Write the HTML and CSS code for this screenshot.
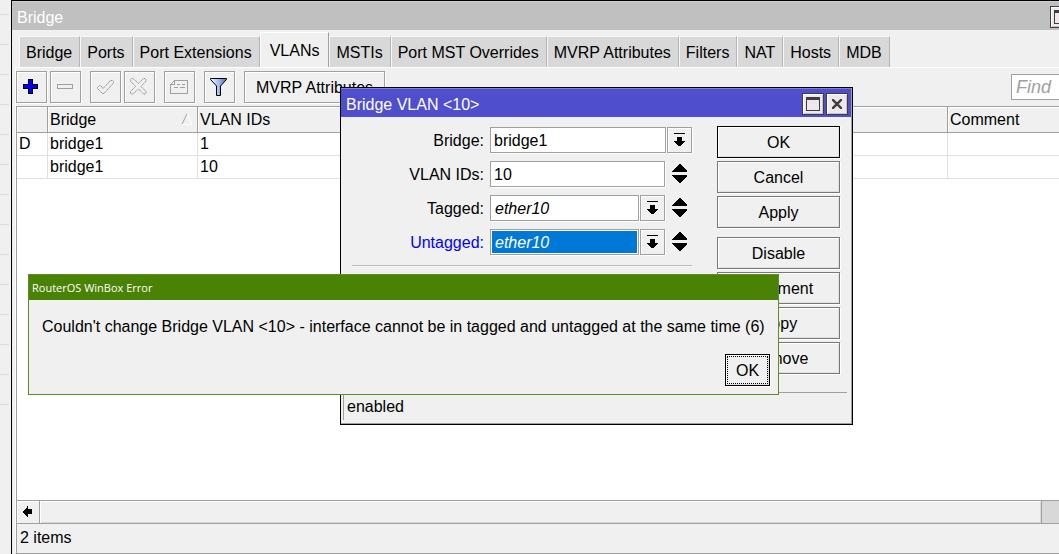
FILE: index.html
```html
<!DOCTYPE html>
<html lang="en">
<head>
<meta charset="utf-8">
<title>Bridge</title>
<link rel="stylesheet" href="styles.css">
</head>
<body>
<svg class="defs" width="0" height="0" aria-hidden="true">
  <defs>
    <symbol id="drop" viewBox="0 0 13 13" shape-rendering="crispEdges"><path d="M1 0h11v1H1zM4 4h5v4h3v1h-1v1h-1v1H9v1H8v1H5v-1H4v-1H3v-1H2V9H1V8h3z"/></symbol>
    <symbol id="spin" viewBox="0 0 15 19" shape-rendering="crispEdges"><path d="M7 0h1l7 7v1H0V7zM0 11h15v1l-7 7H7l-7-7z"/></symbol>
    <symbol id="max" viewBox="0 0 14 14" shape-rendering="crispEdges"><path fill="#403c40" fill-rule="evenodd" d="M0 0h14v14H0zM1 3v10h12V3z"/></symbol>
    <symbol id="close" viewBox="0 0 10 10"><path d="M0 0l10 10M10 0L0 10" stroke="#403c40" stroke-width="2.4"/></symbol>
  </defs>
</svg>
<main class="desktop">
  <section class="window">
    <header class="titlebar">
      <h1 class="title">Bridge</h1>
      <button class="winbtn" aria-label="Maximize"><svg width="14" height="14"><use href="#max"/></svg></button>
      <button class="winbtn" aria-label="Close"><svg width="10" height="10"><use href="#close"/></svg></button>
    </header>
    <nav class="tabs">
      <button class="tab">Bridge</button>
      <button class="tab">Ports</button>
      <button class="tab">Port Extensions</button>
      <button class="tab active">VLANs</button>
      <button class="tab">MSTIs</button>
      <button class="tab">Port MST Overrides</button>
      <button class="tab">MVRP Attributes</button>
      <button class="tab">Filters</button>
      <button class="tab">NAT</button>
      <button class="tab">Hosts</button>
      <button class="tab">MDB</button>
    </nav>
    <div class="panel">
      <div class="toolbar">
        <div class="group">
          <button class="tool" aria-label="Add"><svg width="15" height="15" shape-rendering="crispEdges"><path d="M5 0h5v5h5v5h-5v5H5v-5H0V5h5z"/><path fill="#00f" d="M6 1h3v5h5v3H9v5H6V9H1V6h5z"/></svg></button>
          <button class="tool" aria-label="Remove"><svg width="16" height="5" shape-rendering="crispEdges"><path fill="#a0a0a0" fill-rule="evenodd" d="M0 0h16v5H0zM1 1v3h14V1z"/></svg></button>
        </div>
        <div class="group">
          <button class="tool" aria-label="Enable"><svg width="18" height="16" fill="none"><path d="M1.500 8.500l2-2h1l2.500 3 7.500-8h2l1 1v1.500L8 14.500H6.500l-5-5z" stroke="#909090" stroke-dasharray="1.600 .5"/></svg></button>
          <button class="tool" aria-label="Disable"><svg width="17" height="17" fill="none"><path d="M3 .5l5.500 5 5-5h1.500l1 1V3l-5 5.500 5 5V15l-1 1h-1.500l-5-5-5.500 5H1.500l-1-1v-1.500l5-5-5-5.500V1.500l1-1z" stroke="#909090" stroke-dasharray="1.600 .5"/></svg></button>
        </div>
        <button class="tool" aria-label="Comment"><svg width="18" height="14" fill="none" stroke="#a0a0a0" shape-rendering="crispEdges"><path d="M4.500.5h13v13H.5v-9zM4.500.5v4h-4M7 4.500h3M12 4.500h3M4 7.500h4M10 7.500h5"/></svg></button>
        <button class="tool" aria-label="Filter"><svg width="17" height="18"><defs><linearGradient id="glass"><stop stop-color="#f2f6ff"/><stop offset=".5" stop-color="#a9bdee"/><stop offset="1" stop-color="#4565b5"/></linearGradient></defs><path d="M.5.5h16v1L10.500 8v9.500h-4V8L.5 1.500z" fill="url(#glass)" stroke="#000"/></svg></button>
        <button class="tool wide">MVRP Attributes</button>
        <input class="find" type="text" placeholder="Find" aria-label="Find">
      </div>
      <div class="grid">
        <table class="list">
          <colgroup><col class="c-flag"><col class="c-bridge"><col class="c-ids"><col></colgroup>
          <thead>
            <tr><th></th><th><span class="sorted">Bridge<svg width="12" height="12" fill="none"><path d="M1 11.500L6 .5" stroke="#a0a0a0"/><path d="M6 .5l5 11H1" stroke="#fff"/></svg></span></th><th>VLAN IDs</th><th>Comment</th></tr>
          </thead>
          <tbody>
            <tr><td>D</td><td>bridge1</td><td>1</td><td></td></tr>
            <tr><td></td><td>bridge1</td><td>10</td><td></td></tr>
          </tbody>
        </table>
      </div>
      <div class="scrollbar">
        <button class="scroll-left" aria-label="Scroll left"><svg width="9" height="11" shape-rendering="crispEdges"><path d="M5 0v3h4v5H5v3H4v-1H3V9H2V8H1V7H0V5h1V4h1V3h1V2h1V0z"/></svg></button>
        <div class="thumb"></div>
      </div>
      <footer class="count">2 items</footer>
    </div>
  </section>

  <section class="editor" role="dialog" aria-label="Bridge VLAN">
    <header class="titlebar blue">
      <h2 class="title">Bridge VLAN &lt;10&gt;</h2>
      <button class="winbtn" aria-label="Maximize"><svg width="14" height="14"><use href="#max"/></svg></button>
      <button class="winbtn" aria-label="Close"><svg width="10" height="10"><use href="#close"/></svg></button>
    </header>
    <div class="editor-body">
      <form class="form">
        <div class="row">
          <label for="bridge">Bridge:</label>
          <select class="field" id="bridge"><option>bridge1</option></select>
          <button class="drop" type="button" aria-label="Open bridge list"><svg width="13" height="13"><use href="#drop"/></svg></button>
        </div>
        <div class="row">
          <label for="ids">VLAN IDs:</label>
          <input class="field" id="ids" type="text" value="10">
          <button class="spin" type="button" aria-label="Add or remove VLAN ID"><svg width="15" height="19"><use href="#spin"/></svg></button>
        </div>
        <div class="row">
          <label for="tagged">Tagged:</label>
          <select class="field italic" id="tagged"><option>ether10</option></select>
          <button class="drop" type="button" aria-label="Open tagged list"><svg width="13" height="13"><use href="#drop"/></svg></button>
          <button class="spin" type="button" aria-label="Add or remove tagged"><svg width="15" height="19"><use href="#spin"/></svg></button>
        </div>
        <div class="row">
          <label class="changed" for="untagged">Untagged:</label>
          <select class="field italic selected" id="untagged"><option>ether10</option></select>
          <button class="drop" type="button" aria-label="Open untagged list"><svg width="13" height="13"><use href="#drop"/></svg></button>
          <button class="spin" type="button" aria-label="Add or remove untagged"><svg width="15" height="19"><use href="#spin"/></svg></button>
        </div>
        <hr class="rule">
      </form>
      <div class="actions">
        <button class="btn default">OK</button>
        <button class="btn">Cancel</button>
        <button class="btn">Apply</button>
        <button class="btn apart">Disable</button>
        <button class="btn">Comment</button>
        <button class="btn">Copy</button>
        <button class="btn">Remove</button>
      </div>
    </div>
    <footer class="state">enabled</footer>
  </section>

  <section class="error" role="alertdialog" aria-label="RouterOS WinBox Error">
    <h2 class="error-title">RouterOS WinBox Error</h2>
    <p class="message">Couldn't change Bridge VLAN &lt;10&gt; - interface cannot be in tagged and untagged at the same time (6)</p>
    <div class="error-actions"><button class="btn default focused"><span>OK</span></button></div>
  </section>
</main>
</body>
</html>
```
FILE: styles.css
```css
* { box-sizing: border-box; }
body {
  margin: 0;
  background: #f0f0f0;
  color: #000;
  font: 16px/20px "Liberation Sans", Arial, sans-serif;
}
button, input, select {
  margin: 0;
  padding: 0;
  border: 0;
  border-radius: 0;
  background: none;
  color: inherit;
  font: inherit;
}
svg { display: block; flex: none; }
.defs { position: absolute; }
h1, h2, p { margin: 0; font-size: 16px; font-weight: normal; }

.desktop {
  position: relative;
  height: 100vh;
  padding-left: 11px;
  overflow: hidden;
  background: repeating-linear-gradient(#f0f0f0 0 14px, #dcdcdc 14px 15px, #f0f0f0 15px 30px) 0 0 / 9px 410px no-repeat;
}

/* Bridge list window; it runs past the right edge of the desktop */
.window {
  display: flex;
  flex-direction: column;
  height: 100%;
  margin-right: -40px;
  border: solid #000;
  border-width: 1px 0 0 1px;
  background: #f0f0f0;
}
.titlebar {
  display: flex;
  align-items: center;
  gap: 2px;
  height: 29px;
  padding: 2px 3px 0 5px;
  border-top: 1px solid #d0d0d0;
  background: #c0c0c0;
  color: #fff;
}
.title { flex: 1; padding-top: 2px; }
.winbtn {
  display: flex;
  align-items: center;
  justify-content: center;
  width: 22px;
  height: 22px;
  border: 1px solid #403c40;
  background: #ece8ec;
  box-shadow: inset 1px 1px #fff, inset -1px -1px #c8c4c8;
}
.titlebar .winbtn { margin-bottom: 1px; }
.tabs {
  display: flex;
  align-items: flex-end;
  height: 37px;
  padding-left: 7px;
}
.tab {
  height: 31px;
  padding: 1px 7px 0 6px;
  border: solid #f8f8f8;
  border-width: 1px 1px 0;
  border-right-color: #b4b4b4;
  background: #d8d8d8;
}
.tab.active {
  height: 35px;
  padding: 1px 9px 0;
  border-color: #fff #a0a0a0 #fff #fff;
  background: #f0f0f0;
}
.panel {
  flex: 1;
  display: flex;
  flex-direction: column;
  margin-left: 3px;
  border-top: 1px solid #fff;
  border-left: 1px solid #fff;
  border-bottom: 1px solid #a0a0a0;
}
.toolbar {
  display: flex;
  align-items: center;
  gap: 9px;
  height: 38px;
  padding-right: 4px;
}
.group { display: flex; gap: 3px; }
.tool {
  display: flex;
  align-items: center;
  justify-content: center;
  width: 31px;
  height: 32px;
  padding: 0 2px 1px 0;
  border: 1px solid #a0a0a0;
  box-shadow: inset 1px 1px #fff, 1px 1px #fff;
}
.tool.wide { width: auto; padding: 1px 11px 0; }
.find {
  width: 84px;
  height: 26px;
  margin-left: auto;
  padding: 1px 4px 0;
  border: 1px solid #a0a0a0;
  background: #fff;
}
.find::placeholder { color: #a0a0a0; font-style: italic; font-size: 18px; opacity: 1; }

.grid {
  flex: 1;
  border: solid #a0a0a0;
  border-width: 1px 0 0 1px;
  background: #fff;
}
.list { width: 100%; table-layout: fixed; border-collapse: separate; border-spacing: 0; }
.c-flag { width: 31px; }
.c-bridge { width: 150px; }
.c-ids { width: 750px; }
.list th, .list td { padding: 0 2px; text-align: left; font-weight: normal; }
.list th {
  height: 26px;
  padding-top: 1px;
  border-right: 1px solid #a0a0a0;
  border-bottom: 1px solid #a0a0a0;
  background: #f0f0f0;
  box-shadow: inset 1px 1px #fff;
}
.list td { height: 23px; border-right: 1px solid #e0e0e0; border-bottom: 1px solid #e0e0e0; }
.sorted { display: flex; align-items: center; justify-content: space-between; padding-right: 2px; }
.sorted svg { margin-bottom: 2px; }

.scrollbar {
  display: flex;
  height: 24px;
  border: solid #a0a0a0;
  border-width: 1px 0 1px 1px;
  background: #d8d8d8;
}
.scroll-left {
  display: flex;
  align-items: center;
  justify-content: center;
  width: 23px;
  padding: 0 2px 2px 0;
  border-right: 1px solid #a0a0a0;
  background: #f0f0f0;
  box-shadow: inset 1px 1px #fff;
}
.thumb {
  flex: 1;
  margin-right: 57px;
  border-right: 1px solid #a0a0a0;
  background: #f0f0f0;
  box-shadow: inset 1px 1px #fff, inset -1px -1px #d8d8d8;
}
.count { height: 29px; padding: 4px 3px; border-left: 1px solid #a0a0a0; }

/* VLAN editor */
.editor {
  position: absolute;
  left: 340px;
  top: 87px;
  width: 513px;
  border: 1px solid #000;
  background: #f0f0f0;
  box-shadow: inset -1px -1px #a0a0a0;
}
.titlebar.blue { margin-right: 1px; border-top-color: #8080d8; background: #4f4fcd; }
.editor-body { display: flex; justify-content: space-between; padding: 9px 12px 18px 11px; }
.form { width: 340px; padding-top: 1px; }
.row { display: flex; height: 34px; align-items: flex-start; padding-right: 27px; }
.row:first-child { padding-right: 0; }
.row label { width: 132px; margin-right: 6px; line-height: 28px; text-align: right; }
.changed { color: #00f; }
.field {
  appearance: none;
  flex: 1;
  min-width: 0;
  height: 26px;
  padding: 1px 3px 0;
  border: 1px solid #a0a0a0;
  background: #fff;
  box-shadow: 1px 1px #fff;
}
.italic { padding-left: 4px; font-style: italic; }
.selected { background: #0078d7; color: #fff; box-shadow: inset 0 0 0 1px #fff, 1px 1px #fff; }
.drop {
  display: flex;
  align-items: center;
  justify-content: center;
  width: 25px;
  height: 26px;
  padding-bottom: 1px;
  margin-left: 1px;
  border: 1px solid #a0a0a0;
  box-shadow: inset 1px 1px #fff, 1px 1px #fff;
}
.spin { display: flex; align-items: center; height: 25px; margin: 0 -22px 0 7px; }
.rule { margin: 2px 0 0; border: 0; border-top: 1px solid #bbb; border-bottom: 1px solid #f8f8f8; }
.actions { display: flex; flex-direction: column; gap: 3px; width: 123px; }
.btn {
  height: 32px;
  padding-top: 2px;
  border: 1px solid #787878;
  background: #f0f0f0;
  box-shadow: inset 1px 1px #fff, inset -1px -1px #e0e0e0, 1px 1px #fff;
}
.btn.default { border-color: #000; }
.apart { margin-top: 6px; }
.state {
  height: 28px;
  margin: 0 5px 4px 2px;
  padding: 4px 3px;
  border: solid #a0a0a0;
  border-width: 1px 0 0 1px;
}

/* Error message */
.error {
  position: absolute;
  left: 28px;
  top: 274px;
  width: 751px;
  border: 1px solid #5a9020;
  background: #f0f0f0;
}
.error-title {
  padding: 0 3px;
  background: #4a8205;
  color: #fff;
  font: 11px/25px "Open Sans", "Noto Sans", sans-serif;
}
.message { padding: 17px 13px 0; white-space: nowrap; }
.error-actions { display: flex; justify-content: flex-end; padding: 17px 8px 8px; }
.btn.focused { width: 45px; padding: 1px; }
.focused span { display: block; height: 28px; padding-top: 1px; border: 1px dotted #000; line-height: 26px; }
```
